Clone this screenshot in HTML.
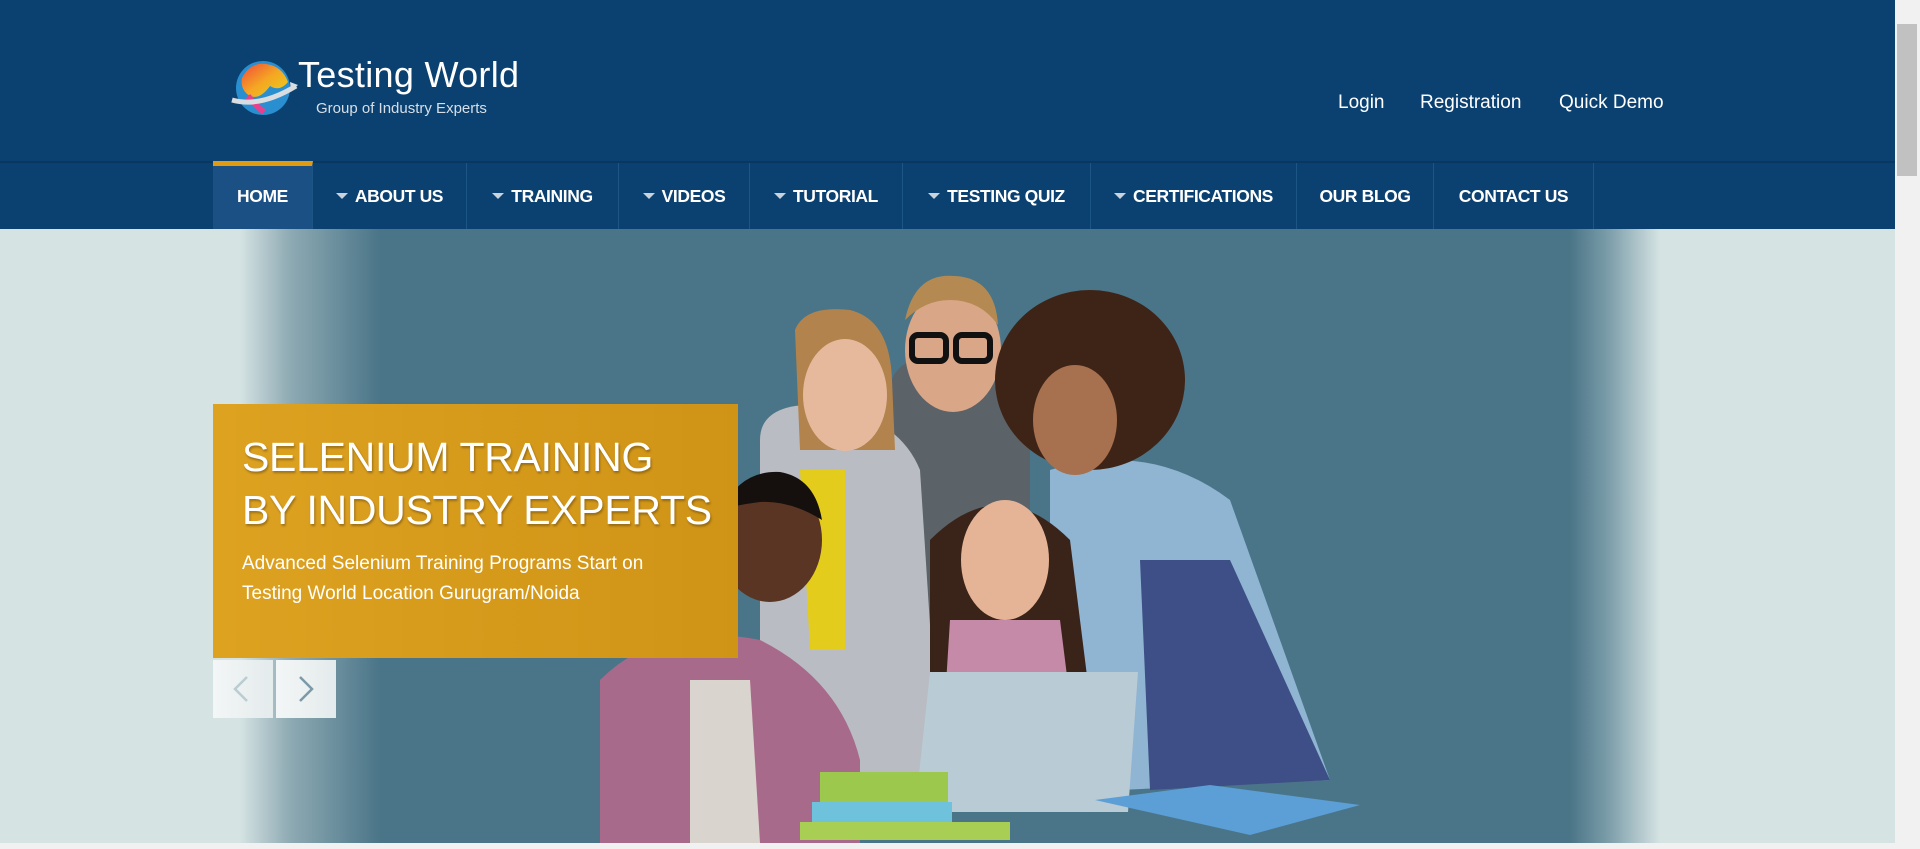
<!DOCTYPE html>
<html><head><meta charset="utf-8"><style>
*{margin:0;padding:0;box-sizing:border-box}
body{width:1920px;height:849px;overflow:hidden;background:#f1f1f1;font-family:"Liberation Sans",sans-serif;position:relative}
#hdr{position:absolute;left:0;top:0;width:1895px;height:161px;background:#0b4170}
#nav{position:absolute;left:0;top:161px;width:1895px;height:68px;background:#0b4170;border-top:2px solid #083760}
#nav .it{position:absolute;top:0;height:66px;line-height:66px;color:#fff;font-weight:bold;font-size:17.5px;text-align:center;border-right:1px solid #1d5585;letter-spacing:-0.4px}
#nav .it i{display:inline-block;width:0;height:0;border-left:6px solid transparent;border-right:6px solid transparent;border-top:6px solid #c9d3dd;vertical-align:middle;margin-right:7px;margin-top:-3px}
#nav .home{background:#1a5083;border-top:5px solid #e09b12;top:-2px;height:68px;line-height:60px}
.top{position:absolute;top:92px;color:#fff;font-size:19px}
#hero{position:absolute;left:0;top:229px;width:1895px;height:614px;background:linear-gradient(90deg,#d5e3e3 0,#d5e3e3 240px,#8eaab3 290px,#4a7588 380px,#4a7588 1570px,#7e9fab 1610px,#d5e3e3 1660px);overflow:hidden}
#box{position:absolute;left:213px;top:404px;width:525px;height:254px;background:linear-gradient(90deg,#dea221,#cf9316);color:#fff;padding:27px 0 0 29px}
#box h1{font-weight:normal;font-size:41px;line-height:53px;text-shadow:1px 2px 2px rgba(0,0,0,.3);letter-spacing:-0.3px}
#box p{font-size:19px;line-height:30px;margin-top:12px}
.arr{position:absolute;top:660px;width:60px;height:58px;background:linear-gradient(90deg,#f3f6f6,#e4ebec)}
</style></head><body>
<div id="hdr">
<svg style="position:absolute;left:230px;top:56px" width="70" height="62" viewBox="0 0 70 62">
<defs><linearGradient id="g" x1="0" y1="0" x2="1" y2="1"><stop offset="0" stop-color="#f04a3a"/><stop offset=".5" stop-color="#f5a623"/><stop offset="1" stop-color="#e8d21a"/></linearGradient></defs>
<circle cx="33" cy="32" r="27" fill="#2a8fd0"/>
<path d="M12 22 Q20 6 36 8 Q52 10 58 26 Q50 36 40 30 Q30 44 20 40 Q10 34 12 22Z" fill="url(#g)"/>
<path d="M18 40 Q26 50 34 56" stroke="#e6418f" stroke-width="6" fill="none"/>
<path d="M2 44 Q30 52 66 30" stroke="#d9dde2" stroke-width="5" fill="none"/>
<path d="M60 26 L68 29 L61 35Z" fill="#d9dde2"/>
</svg>
<div style="position:absolute;left:298px;top:54px;color:#fff;font-size:36px;letter-spacing:.3px">Testing World</div>
<div style="position:absolute;left:316px;top:100px;color:#d6dfe8;font-size:15px">Group of Industry Experts</div>
<div class="top" style="left:1338px">Login</div>
<div class="top" style="left:1420px">Registration</div>
<div class="top" style="left:1559px">Quick Demo</div>
</div>
<div id="nav">
<div class="it home" style="left:213px;width:100px">HOME</div>
<div class="it" style="left:313px;width:154px"><i></i>ABOUT US</div>
<div class="it" style="left:467px;width:152px"><i></i>TRAINING</div>
<div class="it" style="left:619px;width:131px"><i></i>VIDEOS</div>
<div class="it" style="left:750px;width:153px"><i></i>TUTORIAL</div>
<div class="it" style="left:903px;width:188px"><i></i>TESTING QUIZ</div>
<div class="it" style="left:1091px;width:206px"><i></i>CERTIFICATIONS</div>
<div class="it" style="left:1297px;width:137px">OUR BLOG</div>
<div class="it" style="left:1434px;width:160px">CONTACT US</div>
</div>
<div id="hero">
<svg style="position:absolute;left:0;top:0" width="1895" height="614" viewBox="0 229 1895 614">
<g>
<rect x="890" y="360" width="140" height="330" fill="#5b6268" rx="30"/>
<ellipse cx="953" cy="350" rx="48" ry="62" fill="#d9a687"/>
<path d="M905 320 Q915 272 955 276 Q995 278 998 325 Q980 300 950 300 Q925 300 905 320Z" fill="#b58a52"/>
<rect x="912" y="335" width="34" height="26" rx="6" fill="none" stroke="#111" stroke-width="6"/>
<rect x="956" y="335" width="34" height="26" rx="6" fill="none" stroke="#111" stroke-width="6"/>
<path d="M760 440 Q760 400 830 405 Q900 420 920 470 L940 780 L760 780Z" fill="#b9bcc2"/>
<path d="M800 470 L845 470 L845 650 L810 650Z" fill="#e4cc1c"/>
<path d="M795 330 Q805 305 850 310 Q890 320 892 380 L895 450 L800 450Z" fill="#b2834d"/>
<ellipse cx="845" cy="395" rx="42" ry="56" fill="#e6b99d"/>
<path d="M1050 470 Q1150 440 1230 500 L1330 780 L1120 790 L1050 620Z" fill="#8fb5d3"/>
<path d="M1140 560 L1230 560 L1330 780 L1150 790Z" fill="#3d4f86"/>
<ellipse cx="1090" cy="380" rx="95" ry="90" fill="#3d2416"/>
<ellipse cx="1075" cy="420" rx="42" ry="55" fill="#a7704e"/>
<path d="M930 540 Q1000 470 1070 540 L1090 700 L930 700Z" fill="#3a2318"/>
<ellipse cx="1005" cy="560" rx="44" ry="60" fill="#e5b497"/>
<path d="M950 620 L1060 620 L1070 700 L945 700Z" fill="#c58aa8"/>
<path d="M600 680 Q660 620 760 640 Q840 680 860 760 L860 843 L600 843Z" fill="#a86a8a"/>
<path d="M690 680 L750 680 L760 843 L690 843Z" fill="#d9d4ce"/>
<ellipse cx="770" cy="540" rx="52" ry="62" fill="#5a3524"/>
<path d="M722 510 Q740 470 780 472 Q815 478 822 520 Q790 500 760 502 Q735 505 722 510Z" fill="#15100d"/>
<path d="M930 672 L1138 672 L1128 812 L915 812Z" fill="#b9cbd4"/>
<rect x="820" y="772" width="128" height="30" fill="#9cc84d"/>
<rect x="812" y="802" width="140" height="20" fill="#6ec2dc"/>
<rect x="800" y="822" width="210" height="18" fill="#a8cf54"/>
<path d="M1095 800 L1210 785 L1360 805 L1250 835Z" fill="#5c9ed6"/>
</g>
</svg>
</div>
<div id="box"><h1>SELENIUM TRAINING<br>BY INDUSTRY EXPERTS</h1><p>Advanced Selenium Training Programs Start on<br>Testing World Location Gurugram/Noida</p></div>
<div class="arr" style="left:213px"><svg width="60" height="58"><path d="M34 17 L22 29 L34 41" stroke="#b9cdd2" stroke-width="2.5" fill="none"/></svg></div>
<div class="arr" style="left:276px"><svg width="60" height="58"><path d="M24 17 L36 29 L24 41" stroke="#7c9aa8" stroke-width="2.5" fill="none"/></svg></div>
<div style="position:absolute;left:1895px;top:0;width:25px;height:849px;background:#f1f1f1"></div>
<div style="position:absolute;left:1897px;top:24px;width:20px;height:152px;background:#c1c1c1"></div>
</body></html>
